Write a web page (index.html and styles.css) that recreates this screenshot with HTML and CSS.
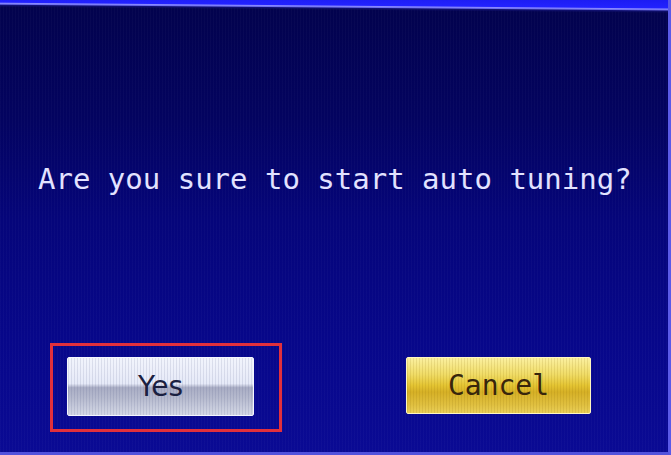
FILE: index.html
```html
<!DOCTYPE html>
<html lang="en">
<head>
<meta charset="utf-8">
<title>Auto Tuning</title>
<link rel="stylesheet" href="styles.css">
</head>
<body>
<div class="screen">
  <p class="message">Are you sure to start auto tuning?</p>
  <div class="actions">
    <div class="focus-ring">
      <button class="btn btn-yes" type="button">Yes</button>
    </div>
    <button class="btn btn-cancel" type="button">Cancel</button>
  </div>
</div>
</body>
</html>
```
FILE: styles.css
```css
html, body {
  margin: 0;
  padding: 0;
  background: #02024c;
}

/* Dialog screen: bright title edge on top, deep navy body below */
.screen {
  box-sizing: border-box;
  width: 671px;
  height: 455px;
  overflow: hidden;
  display: flex;
  flex-direction: column;
  border-right: 3px solid #5a5ae8;
  border-bottom: 3px solid #5252dc;
  background:
    linear-gradient(180.5deg,
      #1c1cf2 0, #2222ff 8px, #8a8aff 9px, #7070f0 10px,
      #101070 11px, rgba(2, 2, 76, 0) 13px),
    repeating-linear-gradient(90deg,
      rgba(255, 255, 255, 0.025) 0 1px, rgba(0, 0, 0, 0) 1px 3px),
    linear-gradient(180deg,
      #02024c 0, #030360 120px, #05057a 220px, #07078a 340px, #0a0a94 455px);
}

.message {
  margin: 162px 0 0 38px;
  font-family: "DejaVu Sans Mono", "Liberation Mono", monospace;
  font-size: 29px;
  line-height: normal;
  color: #e2e2ff;
  white-space: nowrap;
}

.actions {
  display: flex;
  align-items: flex-start;
  margin-top: 147px;
  padding-left: 50px;
}

/* Red highlight around the selected button */
.focus-ring {
  box-sizing: border-box;
  width: 232px;
  height: 89px;
  border: 3px solid #e2303c;
  padding: 11px 0 0 14px;
}

.btn {
  box-sizing: border-box;
  display: flex;
  align-items: center;
  justify-content: center;
  margin: 0;
  padding: 0;
  font-size: 28px;
  cursor: pointer;
}

.btn-yes {
  width: 187px;
  height: 59px;
  border: 1px solid #f4f6ff;
  border-radius: 2px;
  font-family: "DejaVu Sans", "Liberation Sans", sans-serif;
  color: #1a2040;
  background:
    repeating-linear-gradient(90deg,
      rgba(60, 70, 120, 0.12) 0 1px, rgba(0, 0, 0, 0) 1px 3px),
    linear-gradient(180deg,
      #f2f4fc 0, #e6eaf8 45%, #a9adc4 52%, #b6bace 70%, #d4d8e6 100%);
}

.btn-cancel {
  width: 185px;
  height: 57px;
  margin: 14px 0 0 124px;
  border: 1px solid #fff6c0;
  border-radius: 2px;
  font-family: "DejaVu Sans Mono", "Liberation Mono", monospace;
  color: #38260c;
  background:
    repeating-linear-gradient(90deg,
      rgba(120, 90, 0, 0.12) 0 1px, rgba(0, 0, 0, 0) 1px 3px),
    linear-gradient(180deg,
      #fbf0a0 0, #f0dc66 30%, #e4c432 50%, #d6b026 62%, #e0c040 85%, #eacf58 100%);
}
```
